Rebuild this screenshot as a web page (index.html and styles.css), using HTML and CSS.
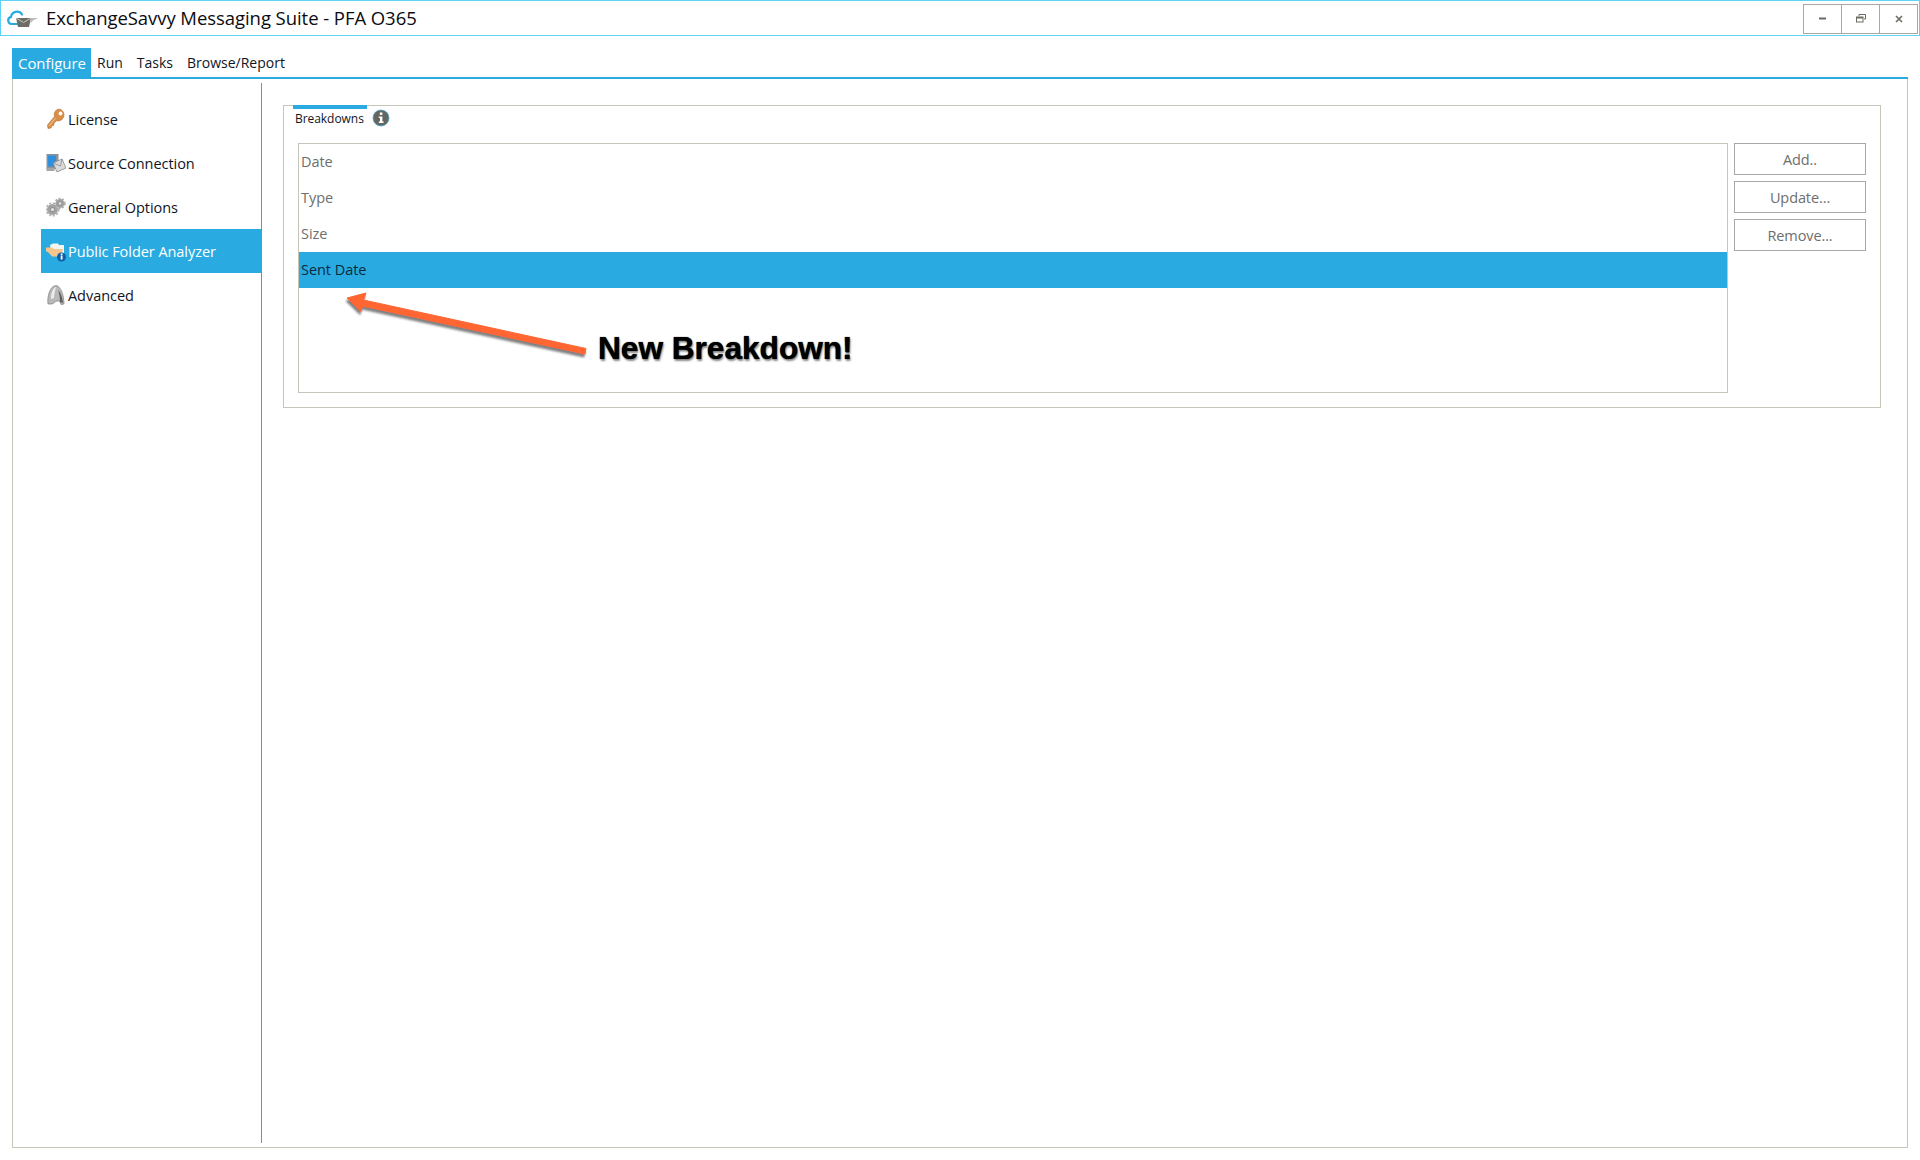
FILE: index.html
```html
<!DOCTYPE html>
<html lang="en">
<head>
<meta charset="utf-8">
<title>ExchangeSavvy Messaging Suite - PFA O365</title>
<link rel="stylesheet" href="styles.css">
</head>
<body>
<header class="titlebar">
  <svg class="logo" width="34" height="20" viewBox="0 0 34 20">
    <path d="M12 15H5.500a3.600 3.600 0 0 1-.5-7.100 6 6 0 0 1 11-2.400" fill="none" stroke="#29abe2" stroke-width="2.200" stroke-linecap="round"/>
    <path d="M10 9h15l-2 9H12z" fill="#6d6d66"/>
    <path d="M10 9l7.500 4.500L25 9" fill="none" stroke="#c9c9c4" stroke-width="1"/>
    <path d="M25 9h7l-5 2.500-2.500 3z" fill="#bdbdbd"/>
  </svg>
  <span class="app-title">ExchangeSavvy Messaging Suite - PFA O365</span>
  <div class="win-controls">
    <button class="win-btn" aria-label="Minimize"><svg width="8" height="3" viewBox="0 0 8 3"><rect y="0.500" width="7" height="2" fill="#6b6b60"/></svg></button>
    <button class="win-btn" aria-label="Restore"><svg width="10" height="9" viewBox="0 0 10 9"><path d="M3 2V.5h6.500V5H8" fill="none" stroke="#6b6b60"/><rect x="0.500" y="3" width="6.500" height="5" fill="none" stroke="#6b6b60"/><rect x="0.500" y="3" width="6.500" height="1.500" fill="#6b6b60"/></svg></button>
    <button class="win-btn" aria-label="Close"><svg width="8" height="8" viewBox="0 0 8 8"><path d="M1 1l6 6M7 1L1 7" stroke="#6b6b60" stroke-width="1.600"/></svg></button>
  </div>
</header>

<nav class="tabs">
  <a class="tab tab-active">Configure</a>
  <a class="tab">Run</a>
  <a class="tab">Tasks</a>
  <a class="tab">Browse/Report</a>
</nav>

<main class="shell">
  <aside class="sidebar">
    <div class="side-item">
      <svg class="side-icon" width="20" height="22" viewBox="0 0 20 22"><path d="M13.500 1a5.500 5.500 0 0 0-5 7.500L1.500 17l.5 3.500 3-.5.800-2.200 1.700-.3.500-2 2.300-2.700A5.500 5.500 0 1 0 13.500 1z" fill="#d98e4a" stroke="#b56f30" stroke-width=".6"/><circle cx="14.500" cy="5.500" r="1.900" fill="#fff"/><path d="M9.500 10L3 18" stroke="#f3c89a" stroke-width="1"/></svg>
      <span>License</span>
    </div>
    <div class="side-item">
      <svg class="side-icon" width="20" height="22" viewBox="0 0 20 22"><rect x="0.500" y="2" width="12" height="15" fill="#8d9298"/><rect x="2" y="3.500" width="8" height="11" fill="#2f8fdc"/><rect x="0.500" y="16" width="8" height="3" fill="#a6a6a6"/><path d="M7 11l9-4 4 9-9 4z" fill="#d9dadb" stroke="#8a8a8a" stroke-width=".8"/><path d="M7 11l7.500 3L16 7" fill="none" stroke="#8a8a8a" stroke-width=".8"/></svg>
      <span>Source Connection</span>
    </div>
    <div class="side-item">
      <svg class="side-icon" width="20" height="22" viewBox="0 0 20 22"><circle cx="6.500" cy="13.500" r="4" fill="#8f8f8f" stroke="#a3a3a3" stroke-width="3"/><circle cx="6.500" cy="13.500" r="6.200" fill="none" stroke="#b5b5b5" stroke-width="1.800" stroke-dasharray="2 1.600"/><circle cx="6.500" cy="13.500" r="1.600" fill="#e4e4e4"/><circle cx="14" cy="7.500" r="3.200" fill="#8f8f8f" stroke="#a0a0a0" stroke-width="2.400"/><circle cx="14" cy="7.500" r="4.900" fill="none" stroke="#adadad" stroke-width="1.600" stroke-dasharray="2 1.500"/><circle cx="14" cy="7.500" r="1.300" fill="#e4e4e4"/></svg>
      <span>General Options</span>
    </div>
    <div class="side-item side-active">
      <svg class="side-icon" width="20" height="22" viewBox="0 0 20 22"><path d="M4 5l3-1.500h5L13 5h5v9H5z" fill="#f4f4f0"/><path d="M0 7.500h6l2 1.500h9l-2 7.500H6L3 13 0 11z" fill="#f7c58c"/><circle cx="15.500" cy="17" r="4.500" fill="#0f5fa8"/><rect x="14.700" y="15.500" width="1.800" height="4" fill="#fff"/><rect x="14.700" y="13.500" width="1.800" height="1.500" fill="#fff"/></svg>
      <span>Public Folder Analyzer</span>
    </div>
    <div class="side-item">
      <svg class="side-icon" width="20" height="22" viewBox="0 0 20 22"><path d="M2 20C1 12 4 2 10 1.500 15 2 18 12 18 20l-3 .5c-1-3-2-4-4-3.500-3 .5-3 3-5.500 3z" fill="#b9b9b9" stroke="#7e7e7e" stroke-width=".7"/><path d="M5 15C5 9 7 4 10 3c-1 4-2 8-2 11z" fill="#ececec"/><path d="M14 18c0-4-.5-8-2-12 3 3 4.500 8 5 13z" fill="#5e5e5e"/></svg>
      <span>Advanced</span>
    </div>
  </aside>

  <section class="content">
    <div class="group">
      <div class="group-head">
        <span class="group-tab">Breakdowns</span>
        <svg class="info" width="18" height="18" viewBox="0 0 18 18"><circle cx="9" cy="9" r="8" fill="#666660" stroke="#4da6cf" stroke-width=".8"/><rect x="7.800" y="3.500" width="2.600" height="2.400" fill="#fff"/><path d="M6.800 7.500h3.600v5h1.200v1.500H6.800v-1.500H8v-3.500H6.800z" fill="#fff"/></svg>
      </div>
      <div class="group-body">
        <ul class="list">
          <li class="row">Date</li>
          <li class="row">Type</li>
          <li class="row">Size</li>
          <li class="row row-selected">Sent Date</li>
        </ul>
        <div class="actions">
          <button class="action">Add..</button>
          <button class="action">Update...</button>
          <button class="action">Remove...</button>
        </div>
      </div>
    </div>
  </section>
</main>

<svg class="arrow" width="250" height="80" viewBox="0 0 250 80">
  <defs>
    <filter id="arrow-shadow" x="-10%" y="-30%" width="120%" height="170%"><feDropShadow dx="-1" dy="3" stdDeviation="1.300" flood-color="#555" flood-opacity=".75"/></filter>
  </defs>
  <g filter="url(#arrow-shadow)">
    <path d="M3 8L22 3 19.500 10 242 58.500 241 64 18.500 16 17 21.500z" fill="#ff6633" stroke="#ff6633" stroke-width="1" stroke-linejoin="round"/>
  </g>
</svg>
<div class="callout">New Breakdown!</div>
</body>
</html>
```
FILE: styles.css
```css
* { box-sizing: border-box; }
html, body { margin: 0; height: 1160px; overflow: hidden; background: #fff; }
body { font-family: "Open Sans", "Noto Sans", sans-serif; font-size: 14.5px; letter-spacing: -0.05px; color: #10151f; position: relative; }

.titlebar {
  height: 36px;
  border: 1px solid #5fd3f5;
  display: flex;
  align-items: center;
  padding-left: 5px;
}
.logo { flex: none; margin-top: 2px; }
.app-title { margin-left: 6px; padding-bottom: 2px; font-size: 18.5px; letter-spacing: -0.06px; color: #0c0c10; }
.win-controls { margin-left: auto; margin-right: 1px; display: flex; margin-top: 1px; }
.win-btn {
  width: 39px;
  height: 30px;
  padding: 0;
  background: #fff;
  border: 1px solid #a8a8a8;
  margin-left: -1px;
  display: flex;
  align-items: center;
  justify-content: center;
}

.tabs {
  margin: 12px 12px 0 12px;
  height: 31px;
  border-bottom: 2px solid #29abe2;
  display: flex;
}
.tab { padding: 0 7px; line-height: 30px; height: 29px; font-size: 14px; letter-spacing: 0; }
.tab-active { background: #29abe2; color: #fff; padding: 0 6px; width: 79px; font-size: 15px; letter-spacing: -0.05px; }
.tab-active + .tab { padding-left: 6px; }

.shell {
  margin: 0 12px;
  height: 1069px;
  border: 1px solid #c6c6b8;
  border-top: 0;
  display: flex;
  align-items: flex-start;
  padding-top: 4px;
}
.sidebar {
  width: 249px;
  height: 1060px;
  border-right: 1px solid #29abe2;
  padding: 14px 0 0 28px;
  flex: none;
}
.side-item {
  height: 44px;
  display: flex;
  align-items: center;
  padding-left: 5px;
}
.side-icon { flex: none; margin-right: 2px; }
.side-active { background: #29abe2; color: #fff; }

.content { flex: 1; padding: 22px 26px 0 21px; }
.group { height: 303px; border: 1px solid #c6c6b8; }
.group-head { height: 38px; margin-top: -1px; padding-left: 9px; display: flex; align-items: flex-start; }
.group-tab {
  border-top: 4px solid #29abe2;
  width: 74px;
  font-size: 12px;
  letter-spacing: -0.05px;
  line-height: 20px;
  padding-left: 2px;
  white-space: nowrap;
}
.info { margin: 4px 0 0 5px; flex: none; }

.group-body { display: flex; padding-left: 14px; }
.list {
  list-style: none;
  margin: 0;
  padding: 0;
  width: 1430px;
  height: 250px;
  border: 1px solid #c6c6b8;
}
.row { height: 36px; line-height: 35px; padding-left: 2px; color: #6e6e6e; }
.row-selected { background: #29abe2; color: #0c2a3c; }

.actions { margin-left: 6px; display: flex; flex-direction: column; gap: 6px; }
.action {
  width: 132px;
  height: 32px;
  padding: 0;
  background: #fff;
  border: 1px solid #a8a8a8;
  font-family: inherit;
  font-size: 14.5px;
  letter-spacing: -0.1px;
  color: #6e6e6e;
}

.arrow { position: absolute; left: 344px; top: 290px; }
.callout {
  position: absolute;
  left: 598px;
  top: 328px;
  font-family: "Liberation Sans", Arial, sans-serif;
  font-weight: 700;
  font-size: 31.700px;
  line-height: 40px;
  color: #000;
  white-space: nowrap;
  text-shadow: 0 0 1px #000, 1px 2px 2px rgba(90, 90, 90, .7);
}
```
